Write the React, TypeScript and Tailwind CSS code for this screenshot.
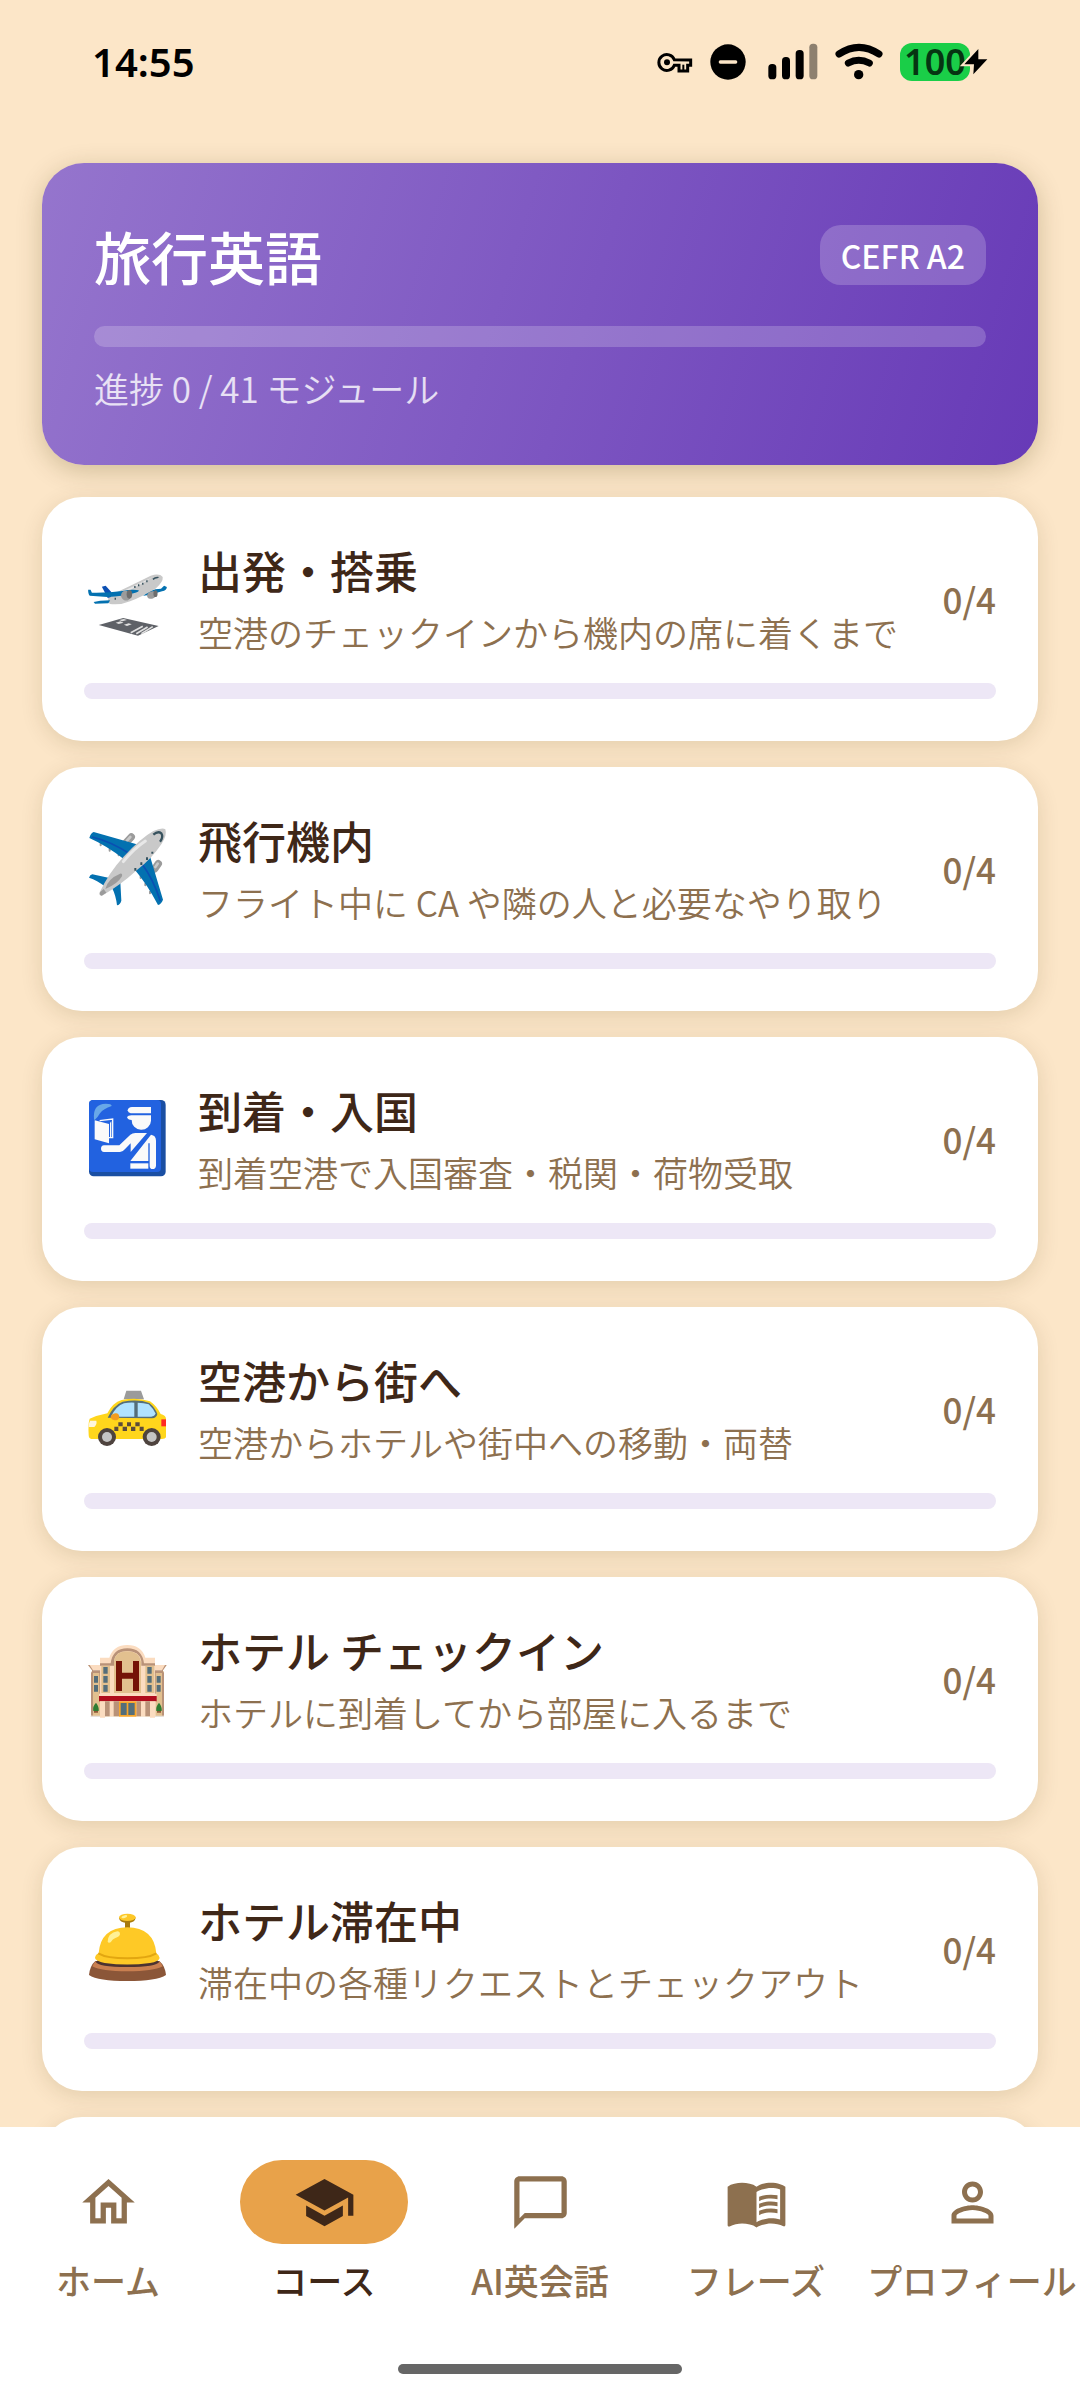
import { useState, type ReactNode } from 'react';
import {
  MdChatBubbleOutline,
  MdMenuBook,
  MdOutlineHome,
  MdPersonOutline,
  MdSchool,
} from 'react-icons/md';
import type { IconType } from 'react-icons';

type Section = {
  id: string;
  title: string;
  description: string;
  done: number;
  total: number;
  art: ReactNode;
};

type Tab = { id: string; label: string; icon: IconType };

// Section artwork
function TakeoffArt() {
  return (
    <svg viewBox="128 229 256 264" preserveAspectRatio="none" className="size-[88px]" aria-hidden="true">
      <path d="M300 345Q318 325 352 324L361 315L369 319Q369 329 355 332L318 343Z" fill="#0371b0" />
      <path d="M200 346Q262 316 322 285Q348 277 357 289Q359 304 336 324Q292 350 262 362Q235 374 203 370Q195 360 200 346Z" fill="#c9c9c9" />
      <path d="M215 344Q270 318 330 288Q300 308 262 328Z" fill="#e6e6e6" />
      <path d="M180 318L191 315L208 335L206 349L197 352Z" fill="#0b4fb3" />
      <path d="M140 327L147 327L151 336Q200 337 240 331Q270 324 287 329Q290 333 272 338Q240 348 196 349L145 345Q140 341 140 327Z" fill="#0371b0" />
      <path d="M156 364L175 360L204 359L199 368L160 369Z" fill="#0371b0" />
      <path d="M327 294Q336 286 347 289L342 293Q335 293 330 298Z" fill="#37525e" />
      <ellipse cx="250" cy="345" rx="14" ry="15" fill="#9b9b9b" transform="rotate(-30 250 345)" />
      <ellipse cx="260" cy="341" rx="8" ry="13" fill="#6d6d6d" />
      <ellipse cx="325" cy="343" rx="14" ry="11" fill="#9b9b9b" transform="rotate(-25 325 343)" />
      <ellipse cx="336" cy="339" rx="6" ry="10" fill="#6d6d6d" />
      <path d="M276 322v-6M287 317v-6M299 312v-6M311 305v-6M219 351v6" stroke="#37525e" strokeWidth="4" />
      <path d="M171 433L242 412L345 436L285 465Z" fill="#5e6167" />
      <path d="M220 426l14 -4l9 4l-14 4zM244 432l14 -4l9 3l-14 5zM230 418l14 -3l9 3l-14 4z" fill="#e0e0e0" />
      <path d="M264 456L299 437M280 459L313 439M295 459L328 438" stroke="#e0e0e0" strokeWidth="5" />
    </svg>
  );
}

function PlaneArt() {
  return (
    <svg viewBox="72 140 264 264" className="size-[88px]" aria-hidden="true">
      <g stroke="#9b9b9b" strokeWidth="6" strokeLinecap="round">
        <path d="M122 190v5M149 206v5M176 220v5M226 262v7M242 288v5M256 310v5M270 334v5" />
      </g>
      <g strokeLinecap="round">
        <path d="M200 185L214 170" stroke="#9b9b9b" strokeWidth="22" />
        <path d="M284 266L295 250" stroke="#9b9b9b" strokeWidth="22" />
        <path d="M201 181L211 170M286 260L293 250" stroke="#c9c9c9" strokeWidth="8" />
      </g>
      <path d="M88 173Q92 158 101 155L238 194L194 238Q140 196 88 173Z" fill="#0371b0" />
      <path d="M222 265L270 228L309 358Q304 371 294 374Q262 312 222 265Z" fill="#0371b0" />
      <path d="M96 170Q150 182 212 222M244 248Q280 296 301 362" stroke="#0b4fb3" strokeWidth="5" fill="none" />
      <path d="M87 292Q90 283 97 282L152 294L134 318Q112 300 87 292Z" fill="#0371b0" />
      <path d="M156 322L181 305L184 361Q180 374 171 375Q168 346 156 322Z" fill="#0371b0" />
      <path d="M118 338Q146 278 190 230Q240 175 280 152Q307 140 316 147Q322 164 305 190Q275 235 230 270Q180 316 126 346Q117 346 118 338Z" fill="#c9c9c9" />
      <path d="M190 244Q220 206 256 182" stroke="#e8e8e8" strokeWidth="9" strokeLinecap="round" fill="none" />
      <path d="M120 336L131 326L139 337L125 346Q118 346 120 336Z" fill="#9b9b9b" />
      <path d="M136 326Q142 296 180 280Q188 278 186 288Q172 312 136 326Z" fill="#9b9b9b" />
      <path d="M280 163Q294 151 304 159Q311 170 300 184" stroke="#37525e" strokeWidth="7" fill="none" />
      <path d="M277 214v6M261 231v8M244 246v8M226 263v8" stroke="#37525e" strokeWidth="6" />
    </svg>
  );
}

function PassportArt() {
  return (
    <svg viewBox="72 111 264 264" className="size-[88px]" aria-hidden="true">
      <rect x="87" y="120" width="230" height="229" rx="14" fill="#1a4fa3" />
      <rect x="87" y="120" width="216" height="216" rx="12" fill="#2262e0" />
      <path d="M102 178Q98 138 128 132Q155 130 155 138Q130 146 120 160Q112 174 104 180Z" fill="#68a8e8" />
      <path d="M119 182L158 177V233L147 233" fill="none" stroke="#fafafa" strokeWidth="4" />
      <path d="M104 181L147 192V250L104 238Z" fill="#fafafa" />
      <path d="M150 188L154 184V230L150 234Z" fill="#fafafa" />
      <path d="M203 151Q204 142 216 141H273V160H212Q204 158 203 151Z" fill="#fafafa" />
      <path d="M201 171Q204 166 214 166H273V182A29 28 0 0 1 215 180Q203 180 201 171Z" fill="#fafafa" />
      <path d="M132 256H178L211 224Q217 219 226 219H261L212 276V250L196 266Q189 275 180 276H132Q123 274 123 266Q123 257 132 256Z" fill="#fafafa" />
      <path d="M273 224Q288 226 288 242V317Q287 327 278 327Q269 327 269 317V250H265V303H211Z" fill="#fafafa" />
      <rect x="211" y="310" width="54" height="16" fill="#fafafa" />
    </svg>
  );
}

function TaxiArt() {
  return (
    <svg viewBox="72 53 264 264" className="size-[88px]" aria-hidden="true">
      <path d="M199 124H243L252 150H191Z" fill="#9b9b9b" />
      <path d="M89 208Q112 198 142 192Q158 160 185 152Q232 143 270 156Q290 170 302 194Q317 198 318 208V264Q316 269 306 269H94Q86 267 86 256Q84 222 89 208Z" fill="#ffd61c" />
      <path d="M143 205Q160 168 188 157Q236 149 268 161Q286 176 292 194Q290 206 276 207Z" fill="#546e7a" />
      <path d="M153 202Q168 170 192 162Q208 159 223 160V202H176Z" fill="#b0e2ff" />
      <path d="M233 160Q252 160 266 165Q280 178 287 193Q284 200 274 202H233Z" fill="#b0e2ff" />
      <path d="M152 205Q152 195 165 192Q176 190 178 202Q177 213 164 213Q156 212 152 205Z" fill="#f39c1f" />
      <path d="M90 214H109Q112 224 103 233H86Q86 221 90 214Z" fill="#fff6dc" />
      <rect x="304" y="210" width="14" height="21" fill="#ff2b23" />
      <path d="M175 219h13v12h-13zM201 219h12v12h-12zM226 219h13v12h-13zM163 232h12v13h-12zM188 232h13v13h-13zM213 232h13v13h-13zM239 232h12v13h-12z" fill="#5b4c3b" />
      <circle cx="141" cy="263" r="27" fill="#4e433e" />
      <circle cx="275" cy="263" r="27" fill="#4e433e" />
      <circle cx="141" cy="263" r="15" fill="#c4c4c4" />
      <circle cx="275" cy="263" r="15" fill="#c4c4c4" />
    </svg>
  );
}

function HotelArt() {
  return (
    <svg viewBox="72 84 264 264" className="size-[88px]" aria-hidden="true">
      <rect x="95" y="186" width="216" height="136" fill="#e2c08f" />
      <path d="M84 168L97 168L120 168V184H96ZM320 168H285V184H309Z" fill="#fbdcc0" />
      <path d="M84 168L96 184V192H120V184H99L89 168ZM320 168L309 184V192H285V184H306L315 168Z" fill="#b99278" />
      <path d="M93 190h6v130h-6zM306 190h6v130h-6zM118 186h4v70h-4zM283 186h4v70h-4z" fill="#b99278" />
      <path d="M120 146H148Q160 108 202 108Q244 108 256 146H285V256H120Z" fill="#fbdcc0" />
      <path d="M120 163H152Q158 118 202 118Q246 118 252 163H285V170H244V156Q238 126 202 126Q166 126 162 156V170H120Z" fill="#b99278" />
      <path d="M162 252V158Q166 127 202 127Q238 127 243 158V252ZM124 170H150V252H124ZM256 170H283V252H256Z" fill="#e2c08f" />
      <path d="M168 156H186V191H219V156H237V246H219V209H186V246H168Z" fill="#751307" />
      <path d="M130 174h13v20h-13zM130 201h13v20h-13zM130 228h13v20h-13zM262 174h13v20h-13zM262 201h13v20h-13zM262 228h13v20h-13zM102 201h12v20h-12zM102 228h12v20h-12zM290 201h12v20h-12zM290 228h12v20h-12z" fill="#546e7a" />
      <rect x="117" y="254" width="173" height="8" fill="#fbdcc0" />
      <rect x="117" y="261" width="173" height="16" fill="#b00d1d" />
      <path d="M120 277H287V322H120Z" fill="#fbdcc0" />
      <path d="M135 277h14v45h-14zM161 277h16v45h-16zM229 277h14v45h-14zM256 277h14v45h-14z" fill="#b99278" />
      <rect x="177" y="277" width="52" height="46" fill="#f9a62b" />
      <path d="M182 282h18v36h-18zM205 282h19v36h-19z" fill="#546e7a" />
      <path d="M92 320H120V324H92ZM285 320H312V324H285Z" fill="#e6e0da" />
      <path d="M108 281Q118 294 116 306H100Q97 292 108 281ZM297 281Q307 294 305 306H289Q287 292 297 281Z" fill="#2f7d32" />
      <path d="M102 306h12v5h-12zM291 306h12v5h-12z" fill="#8d5738" />
      <path d="M120 318h15v8h-15zM270 318h15v8h-15z" fill="#fbdcc0" />
    </svg>
  );
}

function BellArt() {
  return (
    <svg viewBox="72 86 264 264" className="size-[88px]" aria-hidden="true">
      <path d="M87 290Q90 262 106 248H298Q315 262 318 290Q290 308 202 308Q114 308 87 290Z" fill="#8b5638" />
      <path d="M97 264Q102 252 108 248H297Q304 254 308 264Q280 279 202 279Q124 279 97 264Z" fill="#c97f50" />
      <path d="M107 250Q112 246 120 245H284Q294 246 298 250Q290 266 202 266Q114 266 107 250Z" fill="#4c3331" />
      <path d="M195 130H210V152H195Z" fill="#a87b0c" />
      <path d="M177 118Q178 132 202 134Q226 132 227 118Z" fill="#a87b0c" />
      <ellipse cx="202" cy="117" rx="25" ry="11" fill="#fdc727" />
      <ellipse cx="193" cy="115" rx="9" ry="4" fill="#fff195" transform="rotate(-18 193 115)" />
      <path d="M116 225Q122 148 202 147Q282 148 289 225Q298 230 299 239Q296 250 270 254Q202 263 134 254Q107 248 105 239Q106 229 116 225Z" fill="#fec926" />
      <path d="M115 225Q140 240 202 240Q264 240 289 225" fill="none" stroke="#e2a610" strokeWidth="6" />
      <path d="M143 190Q144 164 172 159Q180 159 180 168Q178 176 166 179Q158 182 152 192Q145 195 143 190Z" fill="#fff195" />
    </svg>
  );
}

const sections: Section[] = [
  { id: 'departure', title: '出発・搭乗', description: '空港のチェックインから機内の席に着くまで', done: 0, total: 4, art: <TakeoffArt /> },
  { id: 'inflight', title: '飛行機内', description: 'フライト中に CA や隣の人と必要なやり取り', done: 0, total: 4, art: <PlaneArt /> },
  { id: 'arrival', title: '到着・入国', description: '到着空港で入国審査・税関・荷物受取', done: 0, total: 4, art: <PassportArt /> },
  { id: 'transfer', title: '空港から街へ', description: '空港からホテルや街中への移動・両替', done: 0, total: 4, art: <TaxiArt /> },
  { id: 'checkin', title: 'ホテル チェックイン', description: 'ホテルに到着してから部屋に入るまで', done: 0, total: 4, art: <HotelArt /> },
  { id: 'stay', title: 'ホテル滞在中', description: '滞在中の各種リクエストとチェックアウト', done: 0, total: 4, art: <BellArt /> },
];

const tabs: Tab[] = [
  { id: 'home', label: 'ホーム', icon: MdOutlineHome },
  { id: 'course', label: 'コース', icon: MdSchool },
  { id: 'talk', label: 'AI英会話', icon: MdChatBubbleOutline },
  { id: 'phrase', label: 'フレーズ', icon: MdMenuBook },
  { id: 'profile', label: 'プロフィール', icon: MdPersonOutline },
];

function StatusBar() {
  return (
    <div className="flex h-[124px] flex-shrink-0 items-center justify-between px-[92px] text-black">
      <span className="font-['Noto_Sans'] text-[40px] leading-none font-semibold">14:55</span>
      <div className="flex items-center gap-[17px]">
        <svg viewBox="110 69 108 114" className="h-[38px] w-[36px]" aria-hidden="true">
          <path d="M162 119A24 24 0 1 0 162 136H176V153H202V136H211V120Z" fill="none" stroke="#000" strokeWidth="9" />
          <path d="M189 134V150" fill="none" stroke="#000" strokeWidth="6" />
          <circle cx="140" cy="127" r="9" />
        </svg>
        <svg viewBox="270 69 108 114" className="h-[38px] w-[36px]" aria-hidden="true">
          <circle cx="324" cy="126" r="53" />
          <path d="M301 126H347" stroke="#fce6c8" strokeWidth="10" strokeLinecap="round" />
        </svg>
        <svg viewBox="428 69 165 114" className="h-[38px] w-[55px]" aria-hidden="true">
          <rect x="444" y="132" width="24" height="46" rx="11" />
          <rect x="485" y="111" width="24" height="67" rx="11" />
          <rect x="526" y="90" width="24" height="88" rx="11" />
          <rect x="567" y="71" width="24" height="107" rx="11" fill="#8d806f" />
        </svg>
        <svg viewBox="644 69 144 114" className="h-[38px] w-[48px]" aria-hidden="true">
          <path d="M656 102Q716 62 776 102M684 129Q715 112 747 129" fill="none" stroke="#000" strokeWidth="21" strokeLinecap="round" />
          <circle cx="715" cy="164" r="14" />
        </svg>
        <div className="relative w-[88px]">
          <div className="flex h-[38px] w-[70px] items-center justify-center rounded-[12px] bg-[#1ace48]">
            <span className="font-['Noto_Sans'] text-[36px] leading-none font-semibold text-[#063512]">100</span>
          </div>
          <svg viewBox="1021 69 84 114" className="absolute top-0 right-0 h-[38px] w-[28px]" aria-hidden="true">
            <path d="M1076 87L1034 133H1063L1061 163L1103 118H1076Z" fill="#000" stroke="#fce6c8" strokeWidth="12" paintOrder="stroke" />
          </svg>
        </div>
      </div>
    </div>
  );
}

function ProgressBar({ value, max, label, className, fill }: { value: number; max: number; label: string; className: string; fill: string }) {
  return (
    <div
      role="progressbar"
      aria-label={label}
      aria-valuenow={value}
      aria-valuemax={max}
      className={`w-full overflow-hidden rounded-full ${className}`}
    >
      <div className={`h-full rounded-full ${fill}`} style={{ width: `${(value / max) * 100}%` }} />
    </div>
  );
}

function CourseHeader() {
  return (
    <section className="rounded-[42px] bg-[linear-gradient(107deg,#9575cd,#673ab7)] p-[52px] text-white shadow-[0_6px_26px_rgba(70,60,0,0.24)]">
      <div className="flex items-center justify-between">
        <h1 className="text-[57px] leading-[80px] font-medium">旅行英語</h1>
        <span className="rounded-[21px] bg-white/20 px-[21px] text-[32px] leading-[60px] font-medium">CEFR A2</span>
      </div>
      <ProgressBar value={0} max={41} label="旅行英語" className="mt-[31px] h-[21px] bg-white/20" fill="bg-white" />
      <p className="mt-[16px] text-[35px] leading-[50px] font-[350] text-white/80">進捗 0 / 41 モジュール</p>
    </section>
  );
}

function SectionCard({ section }: { section: Section }) {
  return (
    <button
      type="button"
      className="block w-full cursor-pointer rounded-[40px] bg-white p-[42px] text-left shadow-[0_5px_22px_rgba(70,60,0,0.14)]"
    >
      <div className="flex items-center gap-[26px]">
        {section.art}
        <div className="min-w-0 flex-1">
          <h2 className="text-[44px] leading-[62px] font-medium text-[#3e2718]">{section.title}</h2>
          <p className="text-[35px] leading-[62px] font-[350] whitespace-nowrap text-[#8d704f]">{section.description}</p>
        </div>
        <span className="pb-[4px] text-[35px] font-medium text-[#8d704f]">
          {section.done}/{section.total}
        </span>
      </div>
      <ProgressBar value={section.done} max={section.total} label={section.title} className="mt-[20px] h-[16px] bg-[#ede7f6]" fill="bg-[#673ab7]" />
    </button>
  );
}

function BottomNav({ active, onChange }: { active: string; onChange: (id: string) => void }) {
  return (
    <nav className="relative flex-shrink-0 bg-white pt-[33px] pb-[26px]">
      <div className="grid grid-cols-5">
        {tabs.map(({ id, label, icon: Icon }) => (
          <button
            key={id}
            type="button"
            onClick={() => onChange(id)}
            className={`flex cursor-pointer flex-col items-center gap-[11px] ${id === active ? 'text-[#3e2718]' : 'text-[#8d704f]'}`}
          >
            <span className={`flex h-[84px] w-[168px] items-center justify-center rounded-full ${id === active ? 'bg-[#e8a24a]' : ''}`}>
              <Icon className="size-[63px]" />
            </span>
            <span className="text-[35px] leading-[50px] font-medium whitespace-nowrap">{label}</span>
          </button>
        ))}
      </div>
      <div className="mx-auto mt-[59px] h-[10px] w-[284px] rounded-full bg-[#666666]" />
    </nav>
  );
}

export default function App() {
  const [activeTab, setActiveTab] = useState('course');

  return (
    <div lang="ja" className="flex h-screen flex-col overflow-hidden bg-[#fce6c8] font-['Noto_Sans_CJK_JP',sans-serif]">
      <StatusBar />
      <main className="min-h-0 flex-1 overflow-y-auto px-[42px] pt-[39px] [scrollbar-width:none]">
        <CourseHeader />
        <ul className="mt-[32px] flex flex-col gap-[26px]">
          {sections.map((section) => (
            <li key={section.id}>
              <SectionCard section={section} />
            </li>
          ))}
          {/* next section, still loading */}
          <li className="h-[244px] rounded-[40px] bg-white shadow-[0_5px_22px_rgba(70,60,0,0.14)]" />
        </ul>
      </main>
      <BottomNav active={activeTab} onChange={setActiveTab} />
    </div>
  );
}
